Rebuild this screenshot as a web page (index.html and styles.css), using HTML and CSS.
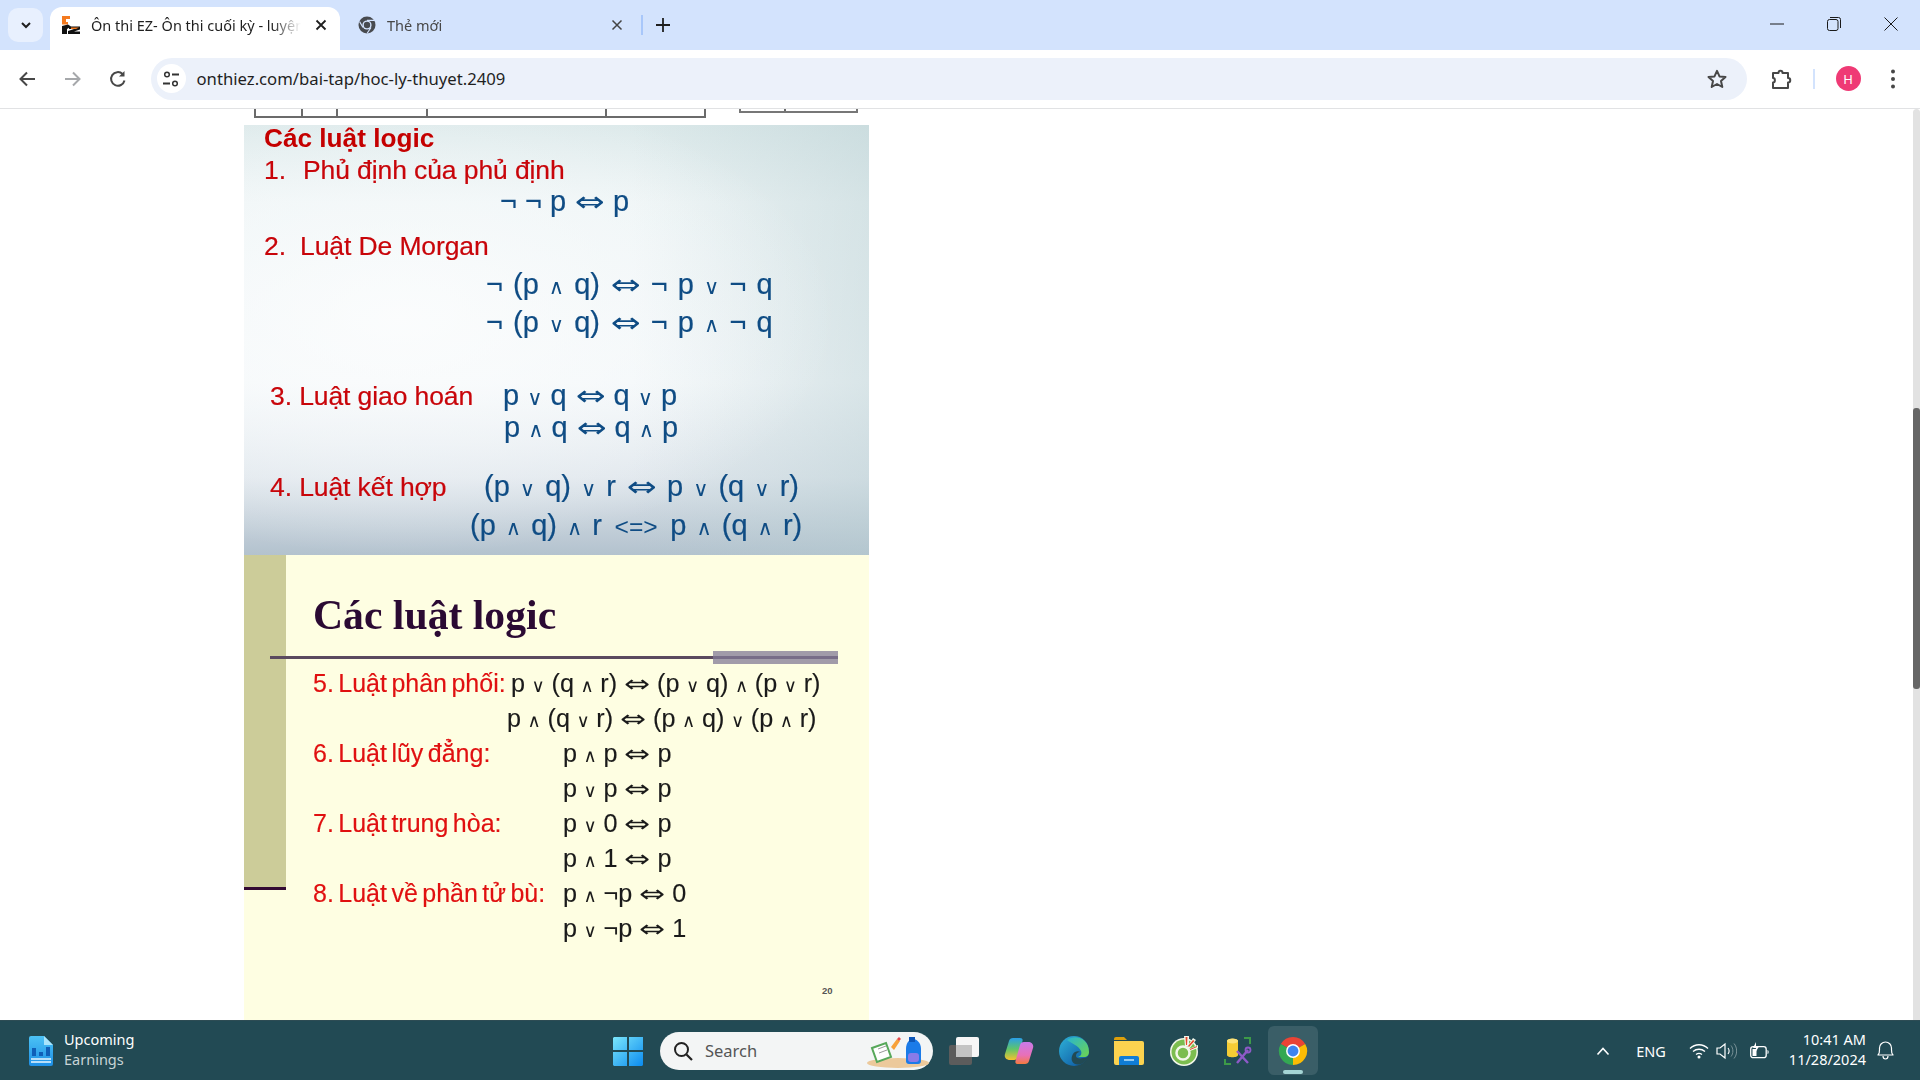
FILE: index.html
```html
<!DOCTYPE html>
<html lang="vi">
<head>
<meta charset="utf-8">
<title>Ôn thi EZ</title>
<link rel="stylesheet" href="styles.css">
</head>
<body>
<div class="tabstrip">
  <div class="tab-menu"><svg width="14" height="14" viewBox="0 0 14 14"><path d="M3 5l4 4 4-4" fill="none" stroke="#1f1f1f" stroke-width="2"/></svg></div>
  <div class="tab active">
    <svg class="fav" width="20" height="20" viewBox="0 0 20 20"><path d="M1 1h8v3H5v3h2v2.500H1z" fill="#f47a1f"/><path d="M1 19v-8l6-1.500 3 2-4 2.500v5z" fill="#111"/><path d="M8 11.500h11v3l-6 2h6V19H7v-3l6-2H8z" fill="#111"/><path d="M10 12.500h8l-3 1.500h-5z" fill="#f47a1f"/></svg>
    <span class="tab-title">Ôn thi EZ- Ôn thi cuối kỳ - luyện</span>
    <svg class="x" width="12" height="12" viewBox="0 0 12 12"><path d="M1.500 1.500l9 9M10.500 1.500l-9 9" stroke="#1f1f1f" stroke-width="1.800"/></svg>
  </div>
  <div class="tab second">
    <svg class="fav" width="18" height="18" viewBox="0 0 18 18"><circle cx="9" cy="9" r="8.500" fill="#474a4f"/><circle cx="9" cy="9" r="4.600" fill="#d3e3fd"/><circle cx="9" cy="9" r="3.200" fill="#474a4f"/><path d="M9 4.400h7.500M5 11.500l-3.500-6M13 11.500l-4 6" stroke="#d3e3fd" stroke-width="1.200"/></svg>
    <span class="tab-title dim">Thẻ mới</span>
    <svg class="x" width="12" height="12" viewBox="0 0 12 12"><path d="M1.500 1.500l9 9M10.500 1.500l-9 9" stroke="#444" stroke-width="1.500"/></svg>
  </div>
  <div class="tab-sep"></div>
  <svg class="plus" width="14" height="14" viewBox="0 0 14 14"><path d="M7 0v14M0 7h14" stroke="#1f1f1f" stroke-width="1.800"/></svg>
  <div class="win">
    <svg width="14" height="14" viewBox="0 0 14 14"><path d="M0 7h14" stroke="#1a1a1a" stroke-width="1"/></svg>
    <svg width="14" height="14" viewBox="0 0 14 14"><rect x=".5" y="2.500" width="10.500" height="11" rx="2" fill="none" stroke="#1a1a1a"/><path d="M3 .5h8.500a2 2 0 0 1 2 2V11" fill="none" stroke="#1a1a1a"/></svg>
    <svg width="14" height="14" viewBox="0 0 14 14"><path d="M.5.500l13 13M13.500.500l-13 13" stroke="#1a1a1a" stroke-width="1"/></svg>
  </div>
</div>

<div class="toolbar">
  <svg class="nav" width="18" height="18" viewBox="0 0 18 18"><path d="M17 9H3M9 2.500L2.500 9 9 15.500" fill="none" stroke="#474747" stroke-width="2"/></svg>
  <svg class="nav" width="18" height="18" viewBox="0 0 18 18"><path d="M1 9h14M9 2.500L15.500 9 9 15.500" fill="none" stroke="#a6a8ab" stroke-width="2"/></svg>
  <svg class="nav" width="18" height="18" viewBox="0 0 18 18"><path d="M15.500 10.500A6.800 6.800 0 1 1 13.600 4" fill="none" stroke="#474747" stroke-width="2"/><path d="M15.500 1v5.500H10z" fill="#474747"/></svg>
  <div class="omnibox">
    <div class="site-ic"><svg width="18" height="18" viewBox="0 0 18 18"><circle cx="5" cy="4.500" r="2.300" fill="none" stroke="#333" stroke-width="1.500"/><path d="M10 4.500h7M1 13.500h7" stroke="#333" stroke-width="1.800"/><circle cx="13" cy="13.500" r="2.300" fill="none" stroke="#333" stroke-width="1.500"/></svg></div>
    <span class="url">onthiez.com/bai-tap/hoc-ly-thuyet.2409</span>
    <svg class="star" width="20" height="20" viewBox="0 0 20 20"><path d="M10 1.800l2.500 5.600 6 .6-4.500 4 1.300 6L10 15l-5.300 3 1.300-6-4.500-4 6-.6z" fill="none" stroke="#474747" stroke-width="2" stroke-linejoin="round"/></svg>
  </div>
  <svg class="puzzle" width="22" height="22" viewBox="0 0 22 22"><path d="M2 5h5.500c0-3 4-3 4 0H17v5c3 0 3 4.500 0 4.500V20H2v-5.500c2.500 0 2.500-4.500 0-4.500z" fill="none" stroke="#474747" stroke-width="2" stroke-linejoin="round"/></svg>
  <div class="tool-sep"></div>
  <div class="avatar">H</div>
  <svg class="dots" width="6" height="22" viewBox="0 0 6 22"><circle cx="3" cy="3.500" r="2" fill="#474747"/><circle cx="3" cy="11" r="2" fill="#474747"/><circle cx="3" cy="18.500" r="2" fill="#474747"/></svg>
</div>

<div class="viewport">
  <main class="page">
    <div class="frag-row">
      <div class="frag-left"><i class="c1"></i><i class="c2"></i><i class="c3"></i><i class="c4"></i><i class="c5"></i></div>
      <div class="frag-right"><i class="c6"></i><i class="c7"></i></div>
    </div>

    <section class="slide-a">
      <h2 class="a-title">Các luật logic</h2>
      <div class="a-row g3 ml20"><span class="red num">1.</span><span class="red">Phủ định của phủ định</span></div>
      <div class="a-row gm1 mlm1"><span class="blue tight">¬ ¬ p <i class="iff">⇔</i> p</span></div>
      <div class="a-row g13 ml20"><span class="red num2">2.</span><span class="red">Luật De Morgan</span></div>
      <div class="a-row g7 mlm2"><span class="blue">¬ (p <i class="op">∧</i> q) <i class="iff">⇔</i> ¬ p <i class="op">∨</i> ¬ q</span></div>
      <div class="a-row g6 mlm2"><span class="blue">¬ (p <i class="op">∨</i> q) <i class="iff">⇔</i> ¬ p <i class="op">∧</i> ¬ q</span></div>
      <div class="a-row g41 ml26"><span class="red lab3">3. Luật giao hoán</span><span class="blue tight">p <i class="op">∨</i> q <i class="iff">⇔</i> q <i class="op">∨</i> p</span></div>
      <div class="a-row g0 mlm3"><span class="blue tight">p <i class="op">∧</i> q <i class="iff">⇔</i> q <i class="op">∧</i> p</span></div>
      <div class="a-row g27 ml26"><span class="red lab4">4. Luật kết hợp</span><span class="blue">(p <i class="op">∨</i> q) <i class="op">∨</i> r <i class="iff">⇔</i> p <i class="op">∨</i> (q <i class="op">∨</i> r)</span></div>
      <div class="a-row g7 mlm4"><span class="blue">(p <i class="op">∧</i> q) <i class="op">∧</i> r <i class="imp">&lt;=&gt;</i> p <i class="op">∧</i> (q <i class="op">∧</i> r)</span></div>
    </section>

    <section class="slide-b">
      <div class="b-band"><div class="b-band-line"></div></div>
      <div class="b-body">
        <h2 class="b-title">Các luật logic</h2>
        <div class="b-rule"><div class="b-rule-bar"></div></div>
        <div class="b-list">
          <div class="b-row"><span class="b-red w1">5. Luật phân phối:</span><span class="b-m">p <i class="op">∨</i> (q <i class="op">∧</i> r) <i class="iff">⇔</i> (p <i class="op">∨</i> q) <i class="op">∧</i> (p <i class="op">∨</i> r)</span></div>
          <div class="b-row"><span class="w1b"></span><span class="b-m">p <i class="op">∧</i> (q <i class="op">∨</i> r) <i class="iff">⇔</i> (p <i class="op">∧</i> q) <i class="op">∨</i> (p <i class="op">∧</i> r)</span></div>
          <div class="b-row"><span class="b-red w2">6. Luật lũy đẳng:</span><span class="b-m">p <i class="op">∧</i> p <i class="iff">⇔</i> p</span></div>
          <div class="b-row"><span class="w2"></span><span class="b-m">p <i class="op">∨</i> p <i class="iff">⇔</i> p</span></div>
          <div class="b-row"><span class="b-red w2">7. Luật trung hòa:</span><span class="b-m">p <i class="op">∨</i> 0 <i class="iff">⇔</i> p</span></div>
          <div class="b-row"><span class="w2"></span><span class="b-m">p <i class="op">∧</i> 1 <i class="iff">⇔</i> p</span></div>
          <div class="b-row"><span class="b-red w2">8. Luật về phần tử bù:</span><span class="b-m">p <i class="op">∧</i> ¬p <i class="iff">⇔</i> 0</span></div>
          <div class="b-row"><span class="w2"></span><span class="b-m">p <i class="op">∨</i> ¬p <i class="iff">⇔</i> 1</span></div>
        </div>
        <div class="b-page">20</div>
      </div>
    </section>
  </main>
  <div class="scroll"><div class="thumb"></div></div>
</div>

<footer class="taskbar">
  <div class="tb-left">
    <svg width="24" height="30" viewBox="0 0 24 30"><defs><linearGradient id="wd" x1="0" y1="0" x2="0" y2="1"><stop offset="0" stop-color="#4cc2f5"/><stop offset="1" stop-color="#1d8fe6"/></linearGradient></defs><path d="M2 0h13l9 9v19a2 2 0 0 1-2 2H2a2 2 0 0 1-2-2V2a2 2 0 0 1 2-2z" fill="url(#wd)"/><path d="M15 0l9 9h-9z" fill="#a9e4fb"/><path d="M3 12h4v8H3zM10 16h4v4h-4zM17 11h4v9h-4z" fill="#0f5fb8"/><path d="M2 23h20M2 26h20" stroke="#e8f6fe" stroke-width="1.600"/></svg>
    <div class="news"><span class="news-a">Upcoming</span><span class="news-b">Earnings</span></div>
  </div>
  <div class="tb-center">
    <svg class="start" width="30" height="30" viewBox="0 0 30 30"><defs><linearGradient id="ws" x1="0" y1="0" x2="1" y2="1"><stop offset="0" stop-color="#7be6fb"/><stop offset="1" stop-color="#0b8bef"/></linearGradient></defs><path d="M1 1h13v13H0V2zM16 1h14v13H16zM0 16h14v14H1l-1-1zM16 16h14v13l-1 1H16z" fill="url(#ws)"/></svg>
    <div class="search">
      <svg width="20" height="20" viewBox="0 0 20 20"><circle cx="8.500" cy="8.500" r="6.500" fill="none" stroke="#222" stroke-width="2"/><path d="M13.500 13.500l5.500 5.500" stroke="#222" stroke-width="2.200"/></svg>
      <span class="search-t">Search</span>
      <svg class="deco" width="64" height="34" viewBox="0 0 64 34"><ellipse cx="32" cy="28" rx="31" ry="5" fill="#ecc99b"/><path d="M6 13l14-5 5 14-14 5z" fill="#fff" stroke="#57a85a" stroke-width="2"/><path d="M12 14l8-3M13 18l8-3" stroke="#999" stroke-width="1"/><path d="M25 12l6-8 3 2-6 9z" fill="#f7a13a"/><path d="M31 4l2-2 2 2-2 2z" fill="#e5484d"/><path d="M40 14c0-7 4-10 7-10s8 3 8 10v12c0 2-1 3-3 3H43c-2 0-3-1-3-3z" fill="#1b7be8"/><path d="M43 2h6v5h-6z" fill="#0e57b8"/><rect x="42" y="18" width="11" height="9" rx="3" fill="#8a7be8"/></svg>
    </div>
    <div class="apps">
      <svg width="30" height="28" viewBox="0 0 30 28"><rect x="0" y="8" width="23" height="20" rx="2" fill="#5c5c5c"/><rect x="7" y="0" width="23" height="20" rx="2" fill="#f6f6f6"/><rect x="7" y="8" width="16" height="12" fill="#c4c4c4"/></svg>
      <svg width="30" height="30" viewBox="0 0 30 30"><defs><linearGradient id="co1" x1="0" y1="0" x2="0" y2="1"><stop offset="0" stop-color="#2a9fe8"/><stop offset=".5" stop-color="#5fc56a"/><stop offset="1" stop-color="#f5c22e"/></linearGradient><linearGradient id="co2" x1="0" y1="0" x2="0" y2="1"><stop offset="0" stop-color="#c77bea"/><stop offset=".6" stop-color="#e870b8"/><stop offset="1" stop-color="#f57a3e"/></linearGradient></defs><path d="M9 2h7c2 0 3 1 2.500 3L14 21c-.5 2-2 3-4 3H6c-4 0-6-3-5-6l4-13C5.500 3 7 2 9 2z" fill="url(#co1)"/><path d="M21 28h-7c-2 0-3-1-2.500-3L16 9c.5-2 2-3 4-3h4c4 0 6 3 5 6l-4 13c-.5 2-2 3-4 3z" fill="url(#co2)"/></svg>
      <svg width="30" height="30" viewBox="0 0 30 30"><defs><linearGradient id="ed1" x1="0" y1="0" x2="1" y2="1"><stop offset="0" stop-color="#2fb2d8"/><stop offset="1" stop-color="#0a4f9e"/></linearGradient><linearGradient id="ed2" x1="0" y1="0" x2="1" y2="1"><stop offset="0" stop-color="#28b5cf"/><stop offset="1" stop-color="#6fd54e"/></linearGradient></defs><circle cx="15" cy="15" r="15" fill="url(#ed1)"/><path d="M8 4c8-6 22-2 22 12 0 3-2 5-5 5h-6c3-1 4-3 3-6-2-5-10-8-14-11z" fill="url(#ed2)"/><path d="M30 19c-1 3-4 8-8 9-3 1-7 1-9-3-1-3 0-7 3-9 2-1 4-1 5 0-2 0-4 1-4 4 0 2 3 3 7 2 3 0 5-1 6-3z" fill="#224a54"/></svg>
      <svg width="30" height="28" viewBox="0 0 30 28"><path d="M0 2a2 2 0 0 1 2-2h8l3 3h-13z" fill="#dc9f0b"/><path d="M0 4h28a2 2 0 0 1 2 2v20a2 2 0 0 1-2 2H2a2 2 0 0 1-2-2z" fill="#fcd34f"/><path d="M5 28v-7a2 2 0 0 1 2-2h16a2 2 0 0 1 2 2v7z" fill="#0f7dd6"/><path d="M10 23h10" stroke="#bfe6fb" stroke-width="1.500"/></svg>
      <svg width="30" height="30" viewBox="0 0 30 30"><circle cx="15" cy="16" r="14" fill="#f3f7ea"/><circle cx="15" cy="16" r="12.500" fill="#7cbd4f"/><circle cx="14" cy="17" r="6.500" fill="none" stroke="#f3f7ea" stroke-width="2.500"/><path d="M15 0h5v10h-4zM24 2l3 2-7 9-2-2zM29 9v3l-8 3-1-2z" fill="#f3f7ea"/><path d="M16.500 1h2l-.5 8h-1zM24 4l1.500 1-5.500 6-1-1zM28 10v1l-7 3v-1z" fill="#e5482d"/></svg>
      <svg width="28" height="28" viewBox="0 0 28 28"><path d="M3 4c0-3 11-3 11 0v14c0 3-11 3-11 0z" fill="#f5cc35"/><ellipse cx="8.500" cy="4" rx="5.500" ry="2.500" fill="#fbe27a"/><path d="M20 1h6v6M1 22v5h6" fill="none" stroke="#3d9a48" stroke-width="2"/><path d="M13 14l11 12M24 13L13 26" stroke="#8e5ac8" stroke-width="2.400"/><circle cx="24" cy="13" r="2.500" fill="none" stroke="#8e5ac8" stroke-width="1.800"/></svg>
      <div class="active-app">
        <svg width="30" height="30" viewBox="0 0 32 32"><path d="M16 16L3 8.500A15 15 0 0 1 29 8.500z" fill="#ea4335"/><path d="M16 16v15A15 15 0 0 1 3 8.500z" fill="#34a853"/><path d="M16 16L29 8.500A15 15 0 0 1 16 31z" fill="#fbbc04"/><circle cx="16" cy="16" r="7.400" fill="#fff"/><circle cx="16" cy="16" r="5.800" fill="#3f83ee"/></svg>
        <span class="pip"></span>
      </div>
    </div>
  </div>
  <div class="tb-right">
    <svg class="t-chev" width="14" height="10" viewBox="0 0 14 10"><path d="M1.500 8.500L7 2.500l5.500 6" fill="none" stroke="#fff" stroke-width="1.600"/></svg>
    <span class="eng">ENG</span>
    <svg class="t-wifi" width="20" height="16" viewBox="0 0 20 16"><path d="M1 5.500c5-5 13-5 18 0M4 8.500c3.500-3 8.500-3 12 0M7 11.500c2-1.500 4-1.500 6 0" fill="none" stroke="#fff" stroke-width="1.300"/><circle cx="10" cy="14" r="1.500" fill="#fff"/></svg>
    <svg class="t-vol" width="21" height="18" viewBox="0 0 21 18"><path d="M1 6h3l5-4v14l-5-4H1z" fill="none" stroke="#fff" stroke-width="1.200"/><path d="M12 6c1.500 2 1.500 4 0 6" fill="none" stroke="#fff" stroke-width="1.100"/><path d="M15 3.500c2.500 3 2.500 8 0 11M18 1.500c3.500 4 3.500 11 0 15" fill="none" stroke="#7a9298" stroke-width="1"/></svg>
    <svg class="t-bat" width="20" height="18" viewBox="0 0 20 18"><rect x=".7" y="4.700" width="15.500" height="11" rx="2.500" fill="none" stroke="#fff" stroke-width="1.300"/><path d="M17.500 8v4c1.500 0 1.500-4 0-4z" fill="#fff"/><path d="M2.500 14V7h4v7z" fill="#fff"/><path d="M6 0L3 6h3l-1 5 4-6.500H6z" fill="#fff"/></svg>
    <div class="clock"><span>10:41 AM</span><span>11/28/2024</span></div>
    <svg class="t-bell" width="17" height="19" viewBox="0 0 17 19"><path d="M1 14c2-2 1.500-4 1.500-7a6 6 0 0 1 12 0c0 3-.5 5 1.500 7z" fill="none" stroke="#fff" stroke-width="1.200" stroke-linejoin="round"/><path d="M6 15c0 4 5 4 5 0" fill="none" stroke="#fff" stroke-width="1.200"/></svg>
  </div>
</footer>
</body>
</html>
```
FILE: styles.css
```css
* { box-sizing: border-box; }
html, body { margin: 0; padding: 0; }
body { width: 1920px; height: 1080px; overflow: hidden; display: flex; flex-direction: column; background: #fff; font-family: "Noto Sans", "Open Sans", sans-serif; }
i { font-style: normal; }

/* tab strip */
.tabstrip { height: 50px; background: #d3e3fd; display: flex; align-items: flex-start; flex: none; position: relative; padding-left: 8px; }
.tab-menu { width: 35px; height: 34px; margin-top: 8px; background: #e8f0fe; border-radius: 10px; display: flex; align-items: center; justify-content: center; }
.tab { height: 43px; margin-top: 7px; display: flex; align-items: center; font-size: 14.500px; color: #1f1f1f; }
.tab.active { width: 290px; margin-left: 7px; background: #fff; border-radius: 12px 12px 0 0; padding: 0 13px 7px 11px; }
.tab.second { width: 288px; padding: 0 5px 7px 18px; }
.tab-title { flex: 1; white-space: nowrap; overflow: hidden; margin-left: 10px; -webkit-mask-image: linear-gradient(90deg, #000 86%, transparent 100%); mask-image: linear-gradient(90deg, #000 86%, transparent 100%); }
.active .tab-title { margin-right: 8px; }
.second .tab-title { margin-left: 11px; }
.dim { color: #474747; }
.x { flex: none; margin-left: 6px; }
.tab-sep { width: 2px; height: 20px; margin-top: 15px; background: #a8c7fa; margin-left: 13px; }
.plus { margin: 18px 0 0 13px; }
.win { margin-left: auto; margin-top: 17px; padding-right: 22px; display: flex; gap: 43px; }

/* toolbar */
.toolbar { height: 59px; flex: none; background: #fff; border-radius: 0 10px 0 0; border-bottom: 1px solid #e1e2e4; display: flex; align-items: center; padding-left: 18px; padding-bottom: 1px; }
.nav { flex: none; margin-right: 27.500px; }
.omnibox { width: 1596px; height: 42px; margin-left: -4px; background: #ecf1fa; border-radius: 21px; display: flex; align-items: center; padding: 0 20px 0 6px; }
.site-ic { width: 29px; height: 29px; border-radius: 50%; background: #fff; display: flex; align-items: center; justify-content: center; }
.url { margin-left: 11px; font-size: 16.700px; color: #1f1f1f; flex: 1; }
.puzzle { margin-left: 24.500px; }
.tool-sep { width: 2px; height: 20px; background: #d3e3fd; margin-left: 19.500px; }
.avatar { width: 25px; height: 25px; border-radius: 50%; background: #ef3a75; color: #fff; font-size: 13px; display: flex; align-items: center; justify-content: center; margin-left: 21px; }
.dots { margin-left: 29px; }

/* page */
.viewport { flex: 1; min-height: 0; display: flex; overflow: hidden; }
.page { width: 1913px; padding-left: 244px; display: flex; flex-direction: column; }
.scroll { width: 7px; background: #e2e2e2; border-radius: 4px 4px 0 0; padding-top: 299px; }
.thumb { height: 281px; background: #666; border-radius: 3px; }

.frag-row { height: 16px; flex: none; display: flex; align-items: flex-start; padding-left: 10px; }
.frag-left { display: flex; height: 10px; border: solid #6b6b6b; border-width: 0 2px 2px 2px; margin-top: -1px; }
.frag-left i, .frag-right i { display: block; height: 100%; border-right: 2px solid #6b6b6b; }
.frag-left i:last-child, .frag-right i:last-child { border-right: 0; }
.c1 { width: 47px; } .c2 { width: 35px; } .c3 { width: 90px; } .c4 { width: 179px; } .c5 { width: 97px; }
.frag-right { display: flex; height: 5px; margin-left: 33px; border: solid #777; border-width: 0 2px 2px 2px; margin-top: -1px; }
.c6 { width: 45px; } .c7 { width: 70px; }

/* slide 1 */
.slide-a { width: 625px; height: 430px; flex: none; display: flex; flex-direction: column; font-family: "Liberation Sans", Arial, sans-serif;
  background:
    radial-gradient(ellipse 70% 55% at 25% 45%, rgba(255,255,255,.7) 0%, rgba(250,252,253,.45) 55%, rgba(240,246,248,0) 100%),
    linear-gradient(90deg, rgba(255,255,255,0) 62%, rgba(180,204,208,.42) 100%),
    linear-gradient(180deg, #dce9ea 0%, #edf4f5 18%, #f3f7f9 60%, #dfe6ec 82%, #b3c2ce 100%); }
.a-title { margin: 0 0 0 20px; height: 26px; line-height: 26px; font-size: 26.200px; font-weight: 700; color: #c40000; filter: blur(.35px); }
.a-row { display: flex; height: 32px; line-height: 32px; align-items: center; white-space: pre; filter: blur(.35px); }
.red { color: #c8050a; font-size: 26.500px; letter-spacing: -.1px; -webkit-text-stroke: .2px #c8050a; }
.blue { color: #0f4c84; font-size: 29px; word-spacing: 2px; -webkit-text-stroke: .2px #0f4c84; }
.tight { word-spacing: 0; }
.num { width: 39px; } .num2 { width: 36px; }
.lab3 { width: 233px; } .lab4 { width: 214px; }
.ml20 { margin-left: 20px; } .ml26 { margin-left: 26px; }
.mlm1 { margin-left: 256px; } .mlm2 { margin-left: 242px; } .mlm3 { margin-left: 260px; } .mlm4 { margin-left: 226px; }
.gm1 { margin-top: -1px; } .g0 { margin-top: 0; } .g3 { margin-top: 3px; } .g6 { margin-top: 6px; } .g7 { margin-top: 7px; } .g13 { margin-top: 13px; } .g27 { margin-top: 27px; } .g41 { margin-top: 41px; }
.op { font-family: "DejaVu Sans", sans-serif; font-size: .72em; -webkit-text-stroke: 0; }
.iff { font-family: "DejaVu Sans", sans-serif; font-size: .95em; display: inline-block; transform: scaleX(1.3); margin: 0 .14em; -webkit-text-stroke: 0; }
.imp { font-size: .85em; -webkit-text-stroke: 0; margin: 0 .1em; }

/* slide 2 */
.slide-b { width: 625px; height: 465px; flex: none; display: flex; background: #fefee2; font-family: "Liberation Sans", Arial, sans-serif; position: relative; }
.b-band { width: 42px; height: 335px; background: #cccc99; position: relative; flex: none; }
.b-band-line { position: absolute; left: 0; right: 0; bottom: 0; height: 3px; background: #330a33; }
.b-body { flex: 1; padding-left: 27px; display: flex; flex-direction: column; }
.b-title { margin: 38px 0 0; height: 44px; line-height: 44px; font-family: "Liberation Serif", "Times New Roman", serif; font-size: 41.700px; font-weight: 700; color: #2b0a33; filter: blur(.3px); }
.b-rule { height: 3px; margin: 19px 0 0 -43px; width: 568px; background: #5b4a5f; position: relative; }
.b-rule-bar { position: absolute; right: 0; top: -5px; width: 125px; height: 13px; background: rgba(130,122,150,.75); }
.b-list { margin-top: 7px; display: flex; flex-direction: column; filter: blur(.3px); }
.b-row { height: 35px; display: flex; align-items: center; white-space: pre; }
.b-red { color: #e01010; font-size: 25px; word-spacing: -2.500px; flex: none; -webkit-text-stroke: .15px #e01010; }
.b-m { color: #1a1a1a; font-size: 25.200px; word-spacing: -.4px; -webkit-text-stroke: .15px #1a1a1a; }
.w1 { width: 198px; } .w1b { width: 194px; flex: none; } .w2 { width: 250px; flex: none; }
.b-page { font-size: 9.500px; font-weight: 700; color: #555; margin: 39px 0 0 509px; }

/* taskbar */
.taskbar { height: 60px; flex: none; background: #224a54; border-top: 1px solid #2d4c54; display: grid; grid-template-columns: 613px 1fr auto; align-items: center; color: #fff; font-family: "Noto Sans", "Open Sans", sans-serif; }
.tb-left { display: flex; align-items: center; padding-left: 29px; gap: 11px; }
.news { display: flex; flex-direction: column; margin-top: -3px; }
.news-a { font-size: 14.500px; line-height: 20px; }
.news-b { font-size: 14.500px; line-height: 20px; color: #c8d4d6; }
.tb-center { display: flex; align-items: center; }
.start { flex: none; }
.search { width: 273px; height: 38px; margin-left: 17px; border-radius: 19px; background: #f3f5f5; color: #555; display: flex; align-items: center; padding-left: 13px; position: relative; }
.search-t { margin-left: 12px; font-size: 16.500px; }
.deco { position: absolute; right: 3px; bottom: 1px; }
.apps { display: flex; align-items: center; gap: 25px; margin-left: 16px; }
.apps > svg { flex: none; }
.active-app { width: 50px; height: 49px; margin-left: -9px; background: #3a5e67; border-radius: 6px; display: flex; align-items: center; justify-content: center; position: relative; }
.pip { position: absolute; left: 15px; bottom: 1px; width: 20px; height: 4px; border-radius: 2px; background: #a5d5d5; }
.tb-right { display: flex; align-items: center; padding-right: 26px; }
.eng { font-size: 14.500px; margin-left: 26px; }
.t-wifi { margin-left: 23px; }
.t-vol { margin-left: 7px; }
.t-bat { margin-left: 13px; }
.clock { display: flex; flex-direction: column; align-items: flex-end; font-size: 14.500px; line-height: 20px; margin-left: 19px; margin-top: -3px; }
.t-bell { margin-left: 11px; }
```
